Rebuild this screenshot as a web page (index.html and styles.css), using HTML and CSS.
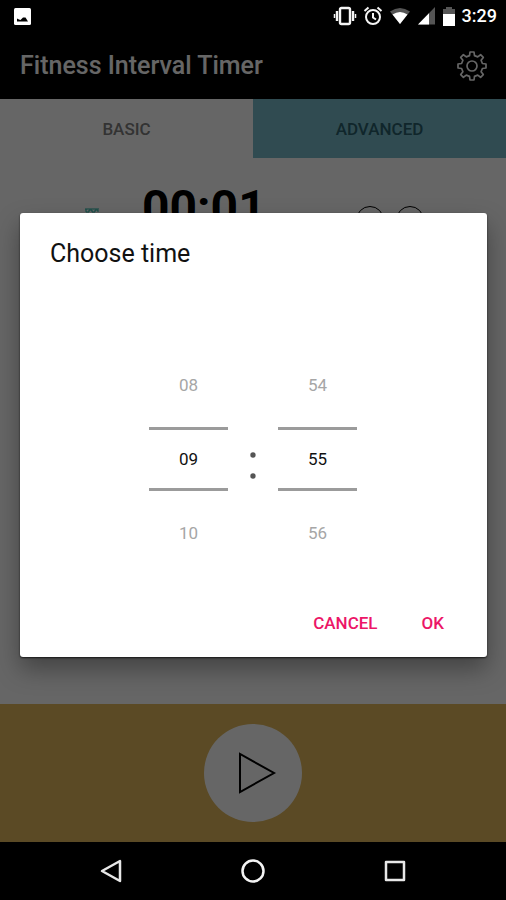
FILE: index.html
```html
<!DOCTYPE html>
<html lang="en">
<head>
<meta charset="utf-8">
<meta name="viewport" content="width=device-width, initial-scale=1">
<title>Fitness Interval Timer</title>
<link rel="stylesheet" href="styles.css">
</head>
<body>
<div class="status-bar">
  <svg class="status-photo" width="17" height="17" viewBox="0 0 17 17" aria-hidden="true"><rect width="17" height="17" rx="1.5" fill="#fff"/><path d="M3 13.500v-3l2 1 1.500.5L9 9.500h2.500l2.500 4z" fill="#000"/></svg>
  <div class="status-icons">
    <svg width="24" height="20" viewBox="0 0 24 20" fill="none" stroke="#f4f4f4" aria-hidden="true"><rect x="7" y="2" width="10" height="16" rx="1.500" stroke-width="2.400"/><path d="M4 5v10M20 5v10" stroke-width="2.400"/><path d="M1.500 8v4M22.500 8v4" stroke-width="1.500"/></svg>
    <svg width="20" height="20" viewBox="0 0 20 20" fill="none" stroke="#f4f4f4" stroke-width="2" aria-hidden="true"><circle cx="10" cy="11" r="7"/><path d="M10 7v4.500l3 2M1.500 5l4-3.500M18.500 5l-4-3.500"/></svg>
    <svg width="22" height="18" viewBox="0 0 22 18" aria-hidden="true"><path d="M1 4.500Q11-2.500 21 4.500L11 17z" fill="#555"/><path d="M3.500 7.500Q11 2.500 18.500 7.500L11 17z" fill="#fff"/></svg>
    <svg width="19" height="18" viewBox="0 0 19 18" aria-hidden="true"><path d="M18 0v17.500H1z" fill="#555"/><path d="M12 6.200v11.300H1z" fill="#fff"/></svg>
    <svg class="status-battery" width="14" height="19" viewBox="0 0 14 19" aria-hidden="true"><path d="M1 2h3V0h6v2h3v6H1z" fill="#555"/><path d="M1 7h12v12H1z" fill="#fff"/></svg>
    <span class="clock">3:29</span>
  </div>
</div>

<main class="app">
  <header class="toolbar">
    <h1 class="toolbar-title">Fitness Interval Timer</h1>
    <button class="icon-button" type="button" aria-label="Settings">
      <svg width="32" height="32" viewBox="0 0 32 32" fill="none" stroke="#fff" stroke-width="1.700" stroke-linejoin="round" aria-hidden="true"><path d="M13.500 5.600 14 2h4l.5 3.600 3.200 1.300 2.900-2.200 2.700 2.700-2.200 2.900 1.300 3.200L30 14v4l-3.600.5-1.300 3.200 2.200 2.900-2.700 2.700-2.900-2.200-3.200 1.300L18 30h-4l-.5-3.600-3.200-1.300-2.900 2.200-2.700-2.700 2.200-2.900-1.300-3.200L2 18v-4l3.600-.5 1.300-3.200-2.200-2.900 2.700-2.700 2.900 2.200z"/><circle cx="16" cy="16" r="5"/></svg>
    </button>
  </header>
  <nav class="tabs">
    <button class="tab" type="button">BASIC</button>
    <button class="tab tab-alt" type="button">ADVANCED</button>
  </nav>
  <section class="rounds">
    <svg class="rounds-mark" width="16" height="16" viewBox="0 0 16 16" fill="none" stroke="#1fb5a5" aria-hidden="true"><path d="M1 1h14M2 1v3h3V2h3v2h3V2h3v2M4 6h8v8H4z"/></svg>
    <div class="total">00:01</div>
    <div class="steppers">
      <button class="stepper" type="button" aria-label="Decrease"></button>
      <button class="stepper" type="button" aria-label="Increase"></button>
    </div>
  </section>
  <footer class="player">
    <button class="play" type="button" aria-label="Start">
      <svg width="40" height="44" viewBox="0 0 40 44" fill="none" stroke="#000" stroke-width="2" aria-hidden="true"><path d="M3 3v38l34-19z"/></svg>
    </button>
  </footer>
</main>

<div class="scrim">
  <div class="dialog" role="dialog" aria-labelledby="dialog-title">
    <h2 class="dialog-title" id="dialog-title">Choose time</h2>
    <div class="pickers">
      <div class="picker">
        <button class="picker-step" type="button">08</button>
        <input class="picker-value" type="text" value="09" aria-label="Minutes">
        <button class="picker-step" type="button">10</button>
      </div>
      <svg class="colon" width="6" height="28" viewBox="0 0 6 28" fill="#555" aria-hidden="true"><circle cx="3" cy="3" r="2.700"/><circle cx="3" cy="24" r="2.700"/></svg>
      <div class="picker">
        <button class="picker-step" type="button">54</button>
        <input class="picker-value" type="text" value="55" aria-label="Seconds">
        <button class="picker-step" type="button">56</button>
      </div>
    </div>
    <div class="actions">
      <button class="action" type="button">CANCEL</button>
      <button class="action" type="button">OK</button>
    </div>
  </div>
</div>

<nav class="system-nav">
  <button class="system-button" type="button" aria-label="Back"><svg width="24" height="26" viewBox="0 0 24 26" fill="none" stroke="#e8e8e8" stroke-width="2.500" stroke-linejoin="round" aria-hidden="true"><path d="M21 3v20L3 13z"/></svg></button>
  <button class="system-button" type="button" aria-label="Home"><svg width="26" height="26" viewBox="0 0 26 26" fill="none" stroke="#f4f4f4" stroke-width="2.500" aria-hidden="true"><circle cx="13" cy="13" r="10.500"/></svg></button>
  <button class="system-button" type="button" aria-label="Recent apps"><svg width="24" height="26" viewBox="0 0 24 26" fill="none" stroke="#e8e8e8" stroke-width="2.500" stroke-linejoin="round" aria-hidden="true"><path d="M3 4h18v18H3z"/></svg></button>
</nav>
</body>
</html>
```
FILE: styles.css
```css
* {
  box-sizing: border-box;
}

body {
  margin: 0;
  min-height: 100vh;
  display: flex;
  flex-direction: column;
  background: #000;
  font-family: Roboto, "Liberation Sans", sans-serif;
}

button {
  margin: 0;
  padding: 0;
  border: 0;
  background: none;
  font: inherit;
  color: inherit;
  cursor: pointer;
}

svg {
  display: block;
}

.status-bar {
  display: flex;
  align-items: center;
  justify-content: space-between;
  height: 32px;
  padding: 0 9px 0 14px;
}

.status-icons {
  display: flex;
  align-items: center;
  gap: 6px;
}

.clock {
  color: #fff;
  font-size: 18px;
  font-weight: 500;
  line-height: 32px;
}

.app {
  flex: 1;
  display: flex;
  flex-direction: column;
  background: #fff;
}

.toolbar {
  display: flex;
  align-items: center;
  justify-content: space-between;
  height: 67px;
  padding: 0 18px 0 20px;
  background: #000;
  color: #fff;
}

.toolbar-title {
  margin: 0;
  font-size: 25px;
  font-weight: 500;
}

.tabs {
  display: grid;
  grid-template-columns: 1fr 1fr;
}

.tab {
  height: 59px;
  font-size: 17px;
  font-weight: 500;
  color: #808080;
}

.tab-alt {
  background: #78bccb;
  color: #2a5f6c;
}

.rounds {
  flex: 1;
  display: flex;
  align-items: flex-start;
  padding: 20px 82px 20px 84px;
}

.rounds-mark {
  margin-top: 30px;
}

.total {
  margin-left: 42px;
  font-size: 48px;
  font-weight: 700;
  line-height: 60px;
}

.steppers {
  display: flex;
  gap: 12px;
  margin-top: 28px;
  margin-left: auto;
}

.stepper {
  width: 28px;
  height: 28px;
  border: 1px solid #000;
  border-radius: 50%;
}

.player {
  display: flex;
  align-items: center;
  justify-content: center;
  height: 138px;
  background: #e3b95c;
}

.play {
  display: grid;
  place-items: center;
  width: 98px;
  height: 98px;
  padding-left: 8px;
  border-radius: 50%;
  background: #fff;
}

.scrim {
  position: absolute;
  inset: 32px 0 58px;
  display: flex;
  align-items: center;
  padding: 0 19px 4px 20px;
  background: rgba(0, 0, 0, 0.6);
}

.dialog {
  flex: 1;
  padding: 25px 31px 12px 30px;
  border-radius: 3px;
  background: #fff;
  box-shadow: 0 1px 2px rgba(0, 0, 0, 0.7), 0 12px 24px rgba(0, 0, 0, 0.35);
}

.dialog-title {
  margin: 0;
  font-size: 25px;
  font-weight: 400;
  line-height: 32px;
  color: #111;
}

.pickers {
  display: flex;
  align-items: center;
  justify-content: center;
  gap: 22px;
  padding: 90px 0 43px;
}

.picker {
  display: grid;
  gap: 17px;
  width: 79px;
}

.picker-step {
  height: 50px;
  font-size: 17px;
  color: #a6a6a6;
}

.picker-value {
  width: 100%;
  height: 64px;
  padding: 0;
  border: solid #9b9b9b;
  border-width: 3px 0;
  border-radius: 0;
  outline: 0;
  background: none;
  font: inherit;
  font-size: 17px;
  text-align: center;
  color: #111;
}

.colon {
  margin-top: 14px;
}

.actions {
  display: flex;
  justify-content: flex-end;
  gap: 20px;
}

.action {
  height: 44px;
  padding: 0 12px;
  font-size: 17px;
  font-weight: 500;
  color: #ec1667;
}

.system-nav {
  display: flex;
  align-items: center;
  justify-content: center;
  gap: 94px;
  height: 58px;
}

.system-button {
  display: grid;
  place-items: center;
  width: 48px;
  height: 48px;
}
```
